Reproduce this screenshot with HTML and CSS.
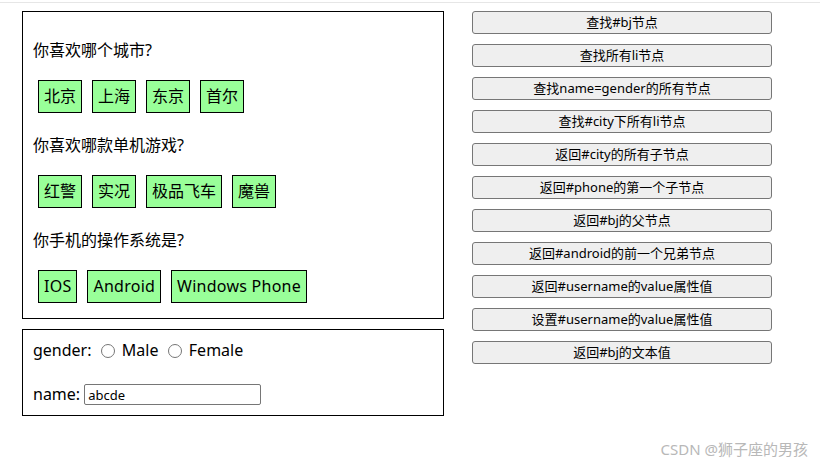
FILE: index.html
```html
<!DOCTYPE html>
<html lang="zh">
<head>
<meta charset="utf-8">
<title>DOM查询</title>
<link rel="stylesheet" href="styles.css">
</head>
<body>
<div class="topline"></div>
<div class="page">
  <div class="left">
    <div class="inner">
      <p class="q first">你喜欢哪个城市?</p>
      <ul class="items" id="city">
        <li id="bj">北京</li>
        <li>上海</li>
        <li>东京</li>
        <li>首尔</li>
      </ul>
      <p class="q">你喜欢哪款单机游戏?</p>
      <ul class="items" id="game">
        <li id="rl">红警</li>
        <li>实况</li>
        <li>极品飞车</li>
        <li>魔兽</li>
      </ul>
      <p class="q">你手机的操作系统是?</p>
      <ul class="items last latin" id="phone">
        <li>IOS</li>
        <li id="android">Android</li>
        <li>Windows Phone</li>
      </ul>
    </div>
    <div class="inner form">
      <div class="gender">gender: <input class="radio" type="radio" name="gender" value="male"> Male <input class="radio" type="radio" name="gender" value="female"> Female</div>
      <div class="name">name: <input class="text" type="text" id="username" value="abcde"></div>
    </div>
  </div>
  <div class="btns">
    <button type="button">查找#bj节点</button>
    <button type="button">查找所有li节点</button>
    <button type="button">查找name=gender的所有节点</button>
    <button type="button">查找#city下所有li节点</button>
    <button type="button">返回#city的所有子节点</button>
    <button type="button">返回#phone的第一个子节点</button>
    <button type="button">返回#bj的父节点</button>
    <button type="button">返回#android的前一个兄弟节点</button>
    <button type="button">返回#username的value属性值</button>
    <button type="button">设置#username的value属性值</button>
    <button type="button">返回#bj的文本值</button>
  </div>
</div>
<div class="watermark">CSDN @狮子座的男孩</div>
</body>
</html>
```
FILE: styles.css
```css
* {
  box-sizing: border-box;
}

html,
body {
  margin: 0;
  padding: 0;
  background: #ffffff;
}

body {
  position: relative;
  width: 820px;
  height: 465px;
  overflow: hidden;
  font-family: "Noto Sans", "Noto Sans CJK SC", sans-serif;
  color: #000000;
}

.topline {
  height: 1px;
  margin-top: 2px;
  background: #e6e6e6;
}

.page {
  display: flex;
  align-items: flex-start;
  gap: 28px;
  padding: 8px 0 0 22px;
}

.left {
  display: flex;
  flex-direction: column;
  gap: 10px;
  width: 422px;
}

.inner {
  border: 1px solid #000000;
  padding: 10px;
  font-size: 16px;
  line-height: 21px;
}

.q {
  margin: 22px 0 0;
}

.q.first {
  margin-top: 18px;
}

.items {
  list-style: none;
  display: flex;
  gap: 10px;
  margin: 19px 0 0;
  padding: 0 0 0 5px;
}

.items.last {
  margin-bottom: 5px;
}

.items li {
  border: 1px solid #000000;
  padding: 5px;
  background: #99ff99;
  line-height: 21px;
}

.items.latin li {
  letter-spacing: 0.25px;
}

.gender {
  height: 21px;
  white-space: nowrap;
}

.radio {
  width: 14px;
  height: 14px;
  margin: 0 3px 0 5px;
  vertical-align: -2px;
}

.name {
  display: flex;
  align-items: center;
  height: 21px;
  margin-top: 23px;
}

.text {
  width: 177px;
  height: 21px;
  margin-left: 4px;
  padding: 1px 3px;
  border: 1px solid #767676;
  border-radius: 2px;
  font-family: "Noto Sans", "Noto Sans CJK SC", sans-serif;
  font-size: 13px;
  color: #000000;
}

.btns {
  display: flex;
  flex-direction: column;
  gap: 10px;
}

.btns button {
  width: 300px;
  height: 23px;
  padding: 0;
  border: 1px solid #767676;
  border-radius: 3px;
  background: #efefef;
  font-family: "Noto Sans", "Noto Sans CJK SC", sans-serif;
  font-size: 13px;
  line-height: 21px;
  color: #000000;
}

.watermark {
  position: absolute;
  right: 12px;
  bottom: 6px;
  font-family: "Noto Sans", "Noto Sans CJK SC", sans-serif;
  font-size: 15px;
  color: #b8b8b8;
}
```
